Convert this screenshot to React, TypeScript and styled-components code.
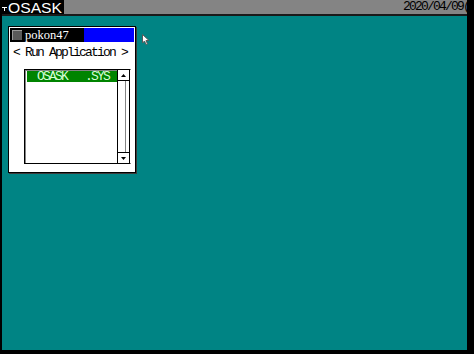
import * as React from 'react';
import styled, { createGlobalStyle } from 'styled-components';

const GlobalStyle = createGlobalStyle`
  html, body {
    margin: 0;
    padding: 0;
    background: #000;
    overflow: hidden;
  }
`

const Screen = styled.div`
  width: 465px;
  height: 350px;
  margin-left: 2px;
  background: #008484;
  display: flex;
  flex-direction: column;
  position: relative;
  font-family: "Liberation Mono", "DejaVu Sans Mono", monospace;
`

const TaskBar = styled.div`
  height: 14px;
  background: #848484;
  border-bottom: 2px solid #1a1a1a;
  display: flex;
  align-items: stretch;
  justify-content: space-between;
  overflow: hidden;
`

const Brand = styled.div`
  background: #000;
  width: 64px;
  height: 16px;
  margin-left: -2px;
  display: flex;
  align-items: center;
  gap: 1px;
  padding-left: 2px;
  box-sizing: border-box;
  color: #fff;
  font-family: "Liberation Sans", Arial, sans-serif;
  font-size: 14px;
  line-height: 1;

  span {
    display: inline-block;
    transform: scaleX(1.12);
    transform-origin: left center;
  }
`

const Clock = styled.div`
  color: #000;
  font-size: 13px;
  letter-spacing: -1.8px;
  line-height: 14px;
  white-space: nowrap;
  margin-right: -2px;
`

const Desktop = styled.div`
  flex: 1;
  padding: 10px 0 0 6px;
`

const Window = styled.div`
  width: 124px;
  height: 143px;
  background: #fff;
  border: 1px solid #000;
  box-shadow: 1px 1px 0 #3a3a3a;
  padding: 1px;
  box-sizing: content-box;
  display: flex;
  flex-direction: column;
`

const TitleBar = styled.div`
  height: 14px;
  display: flex;
  background: #0000ff;
`

const TitleText = styled.div`
  flex: 0 0 74px;
  box-sizing: border-box;
  overflow: hidden;
  background: #000;
  color: #fff;
  display: flex;
  align-items: center;
  gap: 3px;
  padding-left: 2px;
  font-family: "Liberation Serif", serif;
  font-size: 12.5px;
  line-height: 14px;
  white-space: nowrap;
`

const TitleIcon = styled.span`
  flex: 0 0 10px;
  height: 10px;
  background: #5a5a5a;
  border-top: 1px solid #9a9a9a;
  border-left: 1px solid #9a9a9a;
  box-sizing: border-box;
`

const Caption = styled.div`
  color: #000;
  font-size: 13px;
  letter-spacing: -1.8px;
  line-height: 14px;
  padding: 4px 0 0 3px;
  white-space: nowrap;
`

const ListBox = styled.div`
  margin: 9px 0 0 14px;
  width: 107px;
  height: 95px;
  border: 1px solid #000;
  border-right-color: #fff;
  box-shadow: inset 1px 1px 0 #848484;
  display: flex;
  box-sizing: border-box;
`

const Items = styled.div`
  flex: 1;
  padding: 1px 0 0 2px;
`

const Item = styled.div<{ $selected?: boolean }>`
  height: 11px;
  background: ${p => (p.$selected ? '#008400' : 'transparent')};
  color: ${p => (p.$selected ? '#d8ffd8' : '#000')};
  font-size: 13px;
  letter-spacing: -1.8px;
  line-height: 11px;
  padding-left: 10px;
  white-space: pre;
`

const ScrollBar = styled.div`
  width: 11px;
  display: flex;
  flex-direction: column;
  border-left: 1px solid #000;
  border-right: 1px solid #000;
  background: #fff;
`

const ScrollButton = styled.div<{ $down?: boolean }>`
  height: 10px;
  background: #fff;
  border-top: ${p => (p.$down ? '1px solid #000' : 'none')};
  border-bottom: ${p => (p.$down ? 'none' : '1px solid #000')};
  display: flex;
  align-items: center;
  justify-content: center;
`

const Track = styled.div`
  flex: 1;
  border-left: 1px solid #848484;
  margin-left: 7px;
`

const Cursor = styled.svg`
  position: absolute;
  left: 140px;
  top: 34px;
`

const Arrow = ({ down }: { down?: boolean }) => (
  <svg width="5" height="3" viewBox="0 0 5 3">
    {down ? <polygon points="0,0 5,0 2.5,3" fill="#000" /> : <polygon points="2.5,0 5,3 0,3" fill="#000" />}
  </svg>
)

const App = () => {
  return (
    <>
      <GlobalStyle />
      <Screen>
        <TaskBar>
          <Brand>
            <svg width="5" height="6" viewBox="0 0 5 6">
              <rect x="0" y="2" width="5" height="1" fill="#fff" />
              <rect x="2" y="2" width="1" height="4" fill="#fff" />
            </svg>
            <span>OSASK</span>
          </Brand>
          <Clock>2020/04/09(</Clock>
        </TaskBar>
        <Desktop>
          <Window>
            <TitleBar>
              <TitleText>
                <TitleIcon />
                pokon47
              </TitleText>
            </TitleBar>
            <Caption>&lt; Run Application &gt;</Caption>
            <ListBox>
              <Items>
                <Item $selected>{'OSASK   .SYS'}</Item>
              </Items>
              <ScrollBar>
                <ScrollButton><Arrow /></ScrollButton>
                <Track />
                <ScrollButton $down><Arrow down /></ScrollButton>
              </ScrollBar>
            </ListBox>
          </Window>
        </Desktop>
        <Cursor width="8" height="11" viewBox="0 0 8 11">
          <polygon points="0.5,0.5 0.5,9 2.5,7 4,10.5 5.5,10 4,6.5 7,6.5" fill="#fff" stroke="#5a5a5a" strokeWidth="1" />
        </Cursor>
      </Screen>
    </>
  );
};

export default App;
